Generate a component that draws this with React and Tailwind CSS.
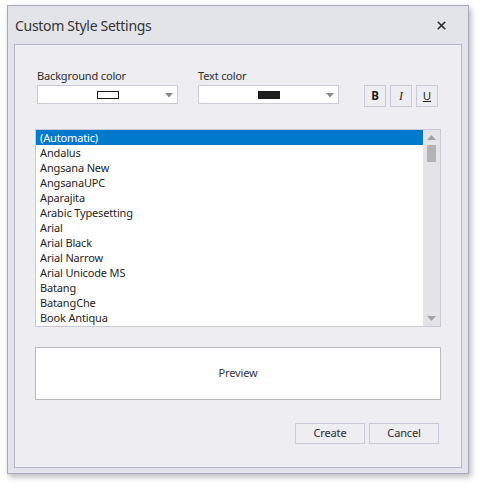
import { X } from "lucide-react";

const fonts = [
  "(Automatic)",
  "Andalus",
  "Angsana New",
  "AngsanaUPC",
  "Aparajita",
  "Arabic Typesetting",
  "Arial",
  "Arial Black",
  "Arial Narrow",
  "Arial Unicode MS",
  "Batang",
  "BatangChe",
  "Book Antiqua",
];

function ColorCombo({ swatch }) {
  return (
    <div className="relative h-[19px] w-[141px] bg-white border border-[#c9c9d8] flex items-center justify-center">
      <div className={"w-[22px] h-[8px] border border-[#1a1a1a] " + swatch} />
      <svg className="absolute right-[4px] top-[7px]" width="8" height="5" viewBox="0 0 8 5">
        <path d="M0 0 H8 L4 4.5 Z" fill="#8a8a8a" />
      </svg>
    </div>
  );
}

function StyleButton({ children, className }) {
  return (
    <button className={"w-[22px] h-[22px] border border-[#c9c9d8] bg-[#ededf2] flex items-center justify-center text-[11.5px] text-[#1e1e1e] " + className}>
      {children}
    </button>
  );
}

export default function App() {
  return (
    <div className="w-[482px] h-[490px] bg-white pl-[7px] pt-[5px] font-['Noto_Sans',sans-serif] text-[#2b2b2b]">
      <div className="w-[462px] h-[469px] bg-[#e3e3ea] border border-[#a8a8c6] shadow-[2px_3px_6px_rgba(0,0,0,0.28)] flex flex-col">
        {/* Title bar */}
        <div className="h-[38px] flex items-center justify-between pl-[7px] pr-[20px]">
          <span className="text-[14px] text-[#333] tracking-[-0.3px]">Custom Style Settings</span>
          <X size={13} strokeWidth={3} className="text-[#2b2b2b]" />
        </div>

        {/* Body */}
        <div className="mx-[6px] mb-[5px] flex-1 bg-[#ededf2] border border-[#b5b5cd] flex flex-col px-[20px] text-[11px] tracking-[-0.15px]">
          <div className="mt-[24px] flex items-start">
            <div className="ml-[2px] flex flex-col">
              <span className="leading-[14px] h-[16px]">Background color</span>
              <ColorCombo swatch="bg-white" />
            </div>
            <div className="ml-[20px] flex flex-col">
              <span className="leading-[14px] h-[16px]">Text color</span>
              <ColorCombo swatch="bg-[#1e1e1e]" />
            </div>
            <div className="ml-[25px] mt-[16px] flex gap-[4px]">
              <StyleButton className="font-bold">B</StyleButton>
              <StyleButton className="italic font-['Liberation_Serif',serif] text-[12px]">I</StyleButton>
              <StyleButton className="underline">U</StyleButton>
            </div>
          </div>

          {/* Font list */}
          <div className="mt-[22px] h-[198px] bg-white border border-[#c9c9d6] flex">
            <div className="flex-1 flex flex-col">
              {fonts.map((f, i) => (
                <div
                  key={f}
                  className={
                    "h-[15px] leading-[15px] pl-[4px] " +
                    (i === 0 ? "bg-[#0079cc] text-white" : "text-[#1e1e1e]")
                  }
                >
                  {f}
                </div>
              ))}
            </div>
            <div className="w-[17px] bg-[#e3e3e8] flex flex-col items-center">
              <svg className="mt-[5px]" width="9" height="5" viewBox="0 0 9 5">
                <path d="M0 5 H9 L4.5 0 Z" fill="#a3a3a3" />
              </svg>
              <div className="mt-[5px] w-[9px] h-[17px] bg-[#b3b3b3]" />
              <div className="flex-1" />
              <svg className="mb-[5px]" width="9" height="5" viewBox="0 0 9 5">
                <path d="M0 0 H9 L4.5 5 Z" fill="#a3a3a3" />
              </svg>
            </div>
          </div>

          {/* Preview */}
          <div className="mt-[20px] h-[53px] bg-white border border-[#b9b9bf] flex items-center justify-center text-[#333]">
            Preview
          </div>

          {/* Footer buttons */}
          <div className="mt-[23px] flex justify-end gap-[4px] pr-[2px]">
            <button className="w-[70px] h-[21px] border border-[#c9c9d8] bg-[#ededf2] text-[#2b2b2b]">Create</button>
            <button className="w-[70px] h-[21px] border border-[#c9c9d8] bg-[#ededf2] text-[#2b2b2b]">Cancel</button>
          </div>
        </div>
      </div>
    </div>
  );
}
